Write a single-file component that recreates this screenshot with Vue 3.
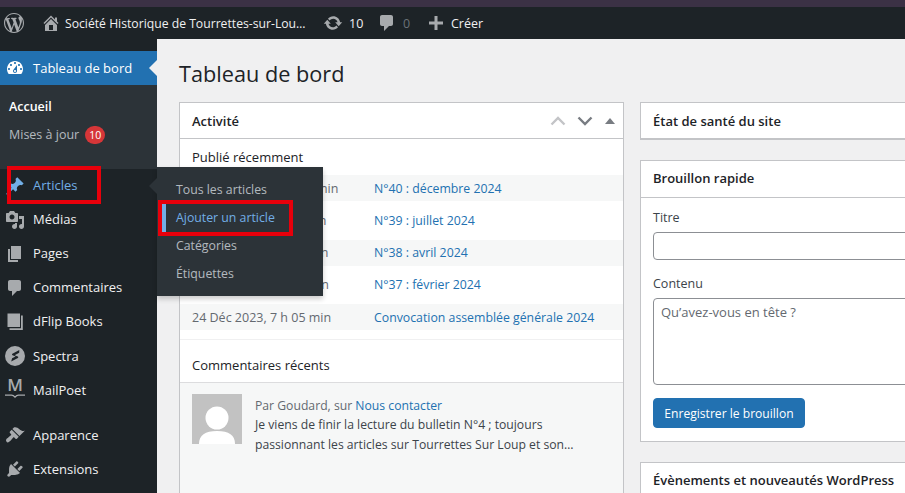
<script setup>
const icons = {
  wp: 'M20 10c0-5.51-4.49-10-10-10C4.48 0 0 4.49 0 10c0 5.52 4.48 10 10 10 5.51 0 10-4.48 10-10zM7.78 15.37L4.37 6.22c.55-.02 1.17-.08 1.17-.08.5-.06.44-1.13-.06-1.11 0 0-1.45.11-2.37.11-.18 0-.37 0-.58-.01C4.12 2.69 6.87 1.11 10 1.11c2.33 0 4.45.87 6.05 2.34-.68-.11-1.65.39-1.65 1.58 0 .74.45 1.36.9 2.1.35.61.55 1.36.55 2.46 0 1.49-1.4 5-1.4 5l-3.03-8.37c.54-.02.82-.17.82-.17.5-.05.44-1.25-.06-1.22 0 0-1.44.12-2.38.12-.87 0-2.33-.12-2.33-.12-.5-.03-.56 1.2-.06 1.22l.92.08 1.26 3.41zM17.41 10c.24-.64.74-1.87.43-4.25.7 1.29 1.05 2.71 1.05 4.25 0 3.29-1.73 6.24-4.4 7.78.97-2.59 1.94-5.2 2.92-7.78zM6.1 18.09C3.12 16.65 1.11 13.53 1.11 10c0-1.3.23-2.48.72-3.59C3.25 10.3 4.67 14.2 6.1 18.09zm4.03-6.63l2.58 6.98c-.86.29-1.76.45-2.71.45-.79 0-1.57-.11-2.29-.33.81-2.38 1.62-4.74 2.42-7.1z',
  home: 'M16 8.5l1.53 1.53-1.06 1.06L10 4.62l-6.47 6.47-1.06-1.06L10 2.5l4 4v-2h2v4zm-6-2.46l6 5.99V18H4v-5.97zM12 17v-5H8v5h4z',
  update: 'M10.2 3.28c3.53 0 6.43 2.61 6.92 6h2.08l-3.5 4-3.5-4h2.32c-.45-1.97-2.21-3.44-4.32-3.44-1.45 0-2.73.71-3.54 1.78L4.95 5.66C6.23 4.2 8.11 3.28 10.2 3.28zm-.4 13.44c-3.52 0-6.43-2.61-6.92-6H.8l3.5-4c1.17 1.33 2.33 2.67 3.5 4H5.48c.45 1.97 2.21 3.44 4.32 3.44 1.45 0 2.73-.71 3.54-1.78l1.71 1.95c-1.28 1.46-3.15 2.39-5.25 2.39z',
  comment: 'M5 2h9c1.1 0 2 .9 2 2v7c0 1.1-.9 2-2 2h-2l-5 5v-5H5c-1.1 0-2-.9-2-2V4c0-1.1.9-2 2-2z',
  plus: 'M17 8.5v3h-5.5V17h-3v-5.5H3v-3h5.5V3h3v5.5z',
  dash: 'M3.76 16h12.48c1.1-1.37 1.76-3.11 1.76-5 0-4.42-3.58-8-8-8s-8 3.58-8 8c0 1.89.66 3.63 1.76 5zM10 4c.55 0 1 .45 1 1s-.45 1-1 1-1-.45-1-1 .45-1 1-1zM6 6c.55 0 1 .45 1 1s-.45 1-1 1-1-.45-1-1 .45-1 1-1zm8 0c.55 0 1 .45 1 1s-.45 1-1 1-1-.45-1-1 .45-1 1-1zm-5.37 5.55L12 7v6c0 1.1-.9 2-2 2s-2-.9-2-2c0-.57.24-1.08.63-1.45zM4 10c.55 0 1 .45 1 1s-.45 1-1 1-1-.45-1-1 .45-1 1-1zm12 0c.55 0 1 .45 1 1s-.45 1-1 1-1-.45-1-1 .45-1 1-1zm-5 3c0-.55-.45-1-1-1s-1 .45-1 1 .45 1 1 1 1-.45 1-1z',
  post: 'M10.44 3.02l1.82-1.82 6.36 6.35-1.83 1.82c-1.05-.68-2.48-.57-3.41.36l-.75.75c-.92.93-1.04 2.35-.35 3.41l-1.83 1.82-2.41-2.41-2.8 2.79c-.42.42-3.38 2.71-3.8 2.29s1.86-3.39 2.28-3.81l2.79-2.79L4.1 9.36l1.83-1.82c1.05.69 2.48.57 3.4-.36l.75-.75c.93-.92 1.05-2.35.36-3.41z',
  media: 'M13 11V4c0-.55-.45-1-1-1h-1.67L9 1H5L3.67 3H2c-.55 0-1 .45-1 1v7c0 .55.45 1 1 1h10c.55 0 1-.45 1-1zM7 4.5c1.38 0 2.5 1.12 2.5 2.5S8.38 9.5 7 9.5 4.5 8.38 4.5 7 5.62 4.5 7 4.5zM14 6h5v10.5c0 1.38-1.12 2.5-2.5 2.5S14 17.88 14 16.5s1.12-2.5 2.5-2.5c.17 0 .34.02.5.05V9h-3V6zm-4 8.05V13h2v3.5c0 1.38-1.12 2.5-2.5 2.5S7 17.88 7 16.5 8.12 14 9.5 14c.17 0 .34.02.5.05z',
  page: 'M6 15V2h10v13H6zm-1 1h8v2H3V5h2v11z',
  book: 'M2.500 1.500H15v13.500H2.500zM16 3.500h1.800V18H4.500v-1.800H16z',
  spectra: 'M10 0a10 10 0 1 0 0 20 10 10 0 0 0 0-20zm4.2 6.800-4.600 2.500 3.200 1.300c.6.3.7 1.100.1 1.400l-6.700 3.600.9-3.300 3.500-1.800-3.100-1.300c-.6-.3-.7-1.100-.1-1.400l6.900-3.900z',
  brush: 'M14.48 11.06L7.41 3.99l1.5-1.5c.5-.56 2.3-.47 3.51.32 1.21.8 1.43 1.28 2.91 2.1 1.18.64 2.45 1.26 4.45.85zm-.71.71L6.7 4.7 4.93 6.47c-.39.39-.39 1.02 0 1.41l1.06 1.06c.39.39.39 1.03 0 1.42-.6.6-1.43 1.11-2.21 1.69-.35.26-.7.53-1.01.84C1.43 13.23.4 14.98 1.4 16.6c1.01 1.61 2.76.59 4.09-.74.31-.31.58-.66.85-1.01.57-.78 1.08-1.61 1.69-2.21.39-.39 1.02-.39 1.41 0l1.06 1.06c.39.39 1.02.39 1.41 0z',
  plug: 'M13.11 4.36L9.87 7.6 8 5.73l3.24-3.24c.35-.34 1.05-.2 1.56.32.52.51.66 1.21.31 1.55zm-8 1.77l.91-1.12 9.01 9.01-1.19.84c-.71.71-2.63 1.16-3.82 1.16H6.14L4.9 17.26c-.59.59-1.54.59-2.12 0-.59-.58-.59-1.53 0-2.12l1.24-1.24v-3.88c0-1.13.4-3.19 1.09-3.89zm7.26 3.97l3.24-3.24c.34-.35 1.04-.21 1.55.31.52.51.66 1.21.31 1.55l-3.24 3.25z'
}
const menuTop = [
  { label: 'Médias', icon: 'media' },
  { label: 'Pages', icon: 'page' },
  { label: 'Commentaires', icon: 'comment' },
  { label: 'dFlip Books', icon: 'book' },
  { label: 'Spectra', icon: 'spectra' }
]
const flyout = ['Tous les articles', 'Ajouter un article', 'Catégories', 'Étiquettes']
const posts = [
  { date: '16 Déc 2024, 10 h 24 min', title: 'N°40 : décembre 2024' },
  { date: '3 Juil 2024, 11 h 30 min', title: 'N°39 : juillet 2024' },
  { date: '9 Avr 2024, 10 h 15 min', title: 'N°38 : avril 2024' },
  { date: '4 Fév 2024, 18 h 22 min', title: 'N°37 : février 2024' },
  { date: '24 Déc 2023, 7 h 05 min', title: 'Convocation assemblée générale 2024' }
]
</script>

<template>
  <div class="page">
    <div class="strip"></div>
    <header class="bar">
      <svg class="bar-logo" viewBox="0 0 20 20"><path :d="icons.wp" /></svg>
      <svg class="bar-home" viewBox="0 0 20 20"><path :d="icons.home" /></svg>
      <span class="bar-site">Société Historique de Tourrettes-sur-Lou…</span>
      <svg class="bar-update" viewBox="0 0 20 20"><path :d="icons.update" /></svg>
      <span class="bar-count">10</span>
      <svg class="bar-comment" viewBox="0 0 20 20"><path :d="icons.comment" /></svg>
      <span class="bar-zero">0</span>
      <svg class="bar-plus" viewBox="0 0 20 20"><path :d="icons.plus" /></svg>
      <span class="bar-new">Créer</span>
    </header>
    <div class="body">
      <aside class="side">
        <div class="gap-top"></div>
        <div class="item current">
          <svg class="ico" viewBox="0 0 20 20"><path :d="icons.dash" /></svg>
          <span>Tableau de bord</span>
          <i class="cur-arrow"></i>
        </div>
        <div class="sub">
          <div class="sub-a">Accueil</div>
          <div class="sub-b">Mises à jour <span class="badge">10</span></div>
        </div>
        <div class="item active">
          <svg class="ico" viewBox="0 0 20 20"><path :d="icons.post" /></svg>
          <span>Articles</span>
        </div>
        <div v-for="m in menuTop" :key="m.label" class="item">
          <svg class="ico" viewBox="0 0 20 20"><path :d="icons[m.icon]" /></svg>
          <span>{{ m.label }}</span>
        </div>
        <div class="item">
          <span class="mp-ico"><b>M</b><svg viewBox="0 0 20 5"><path d="M0 1.200h6.500c1.500 0 2.500.8 3.500 2 1-1.200 2-2 3.500-2H20" fill="none" stroke="#a7aaad" stroke-width="1.300" /></svg></span>
          <span>MailPoet</span>
        </div>
        <div class="sep"></div>
        <div class="item">
          <svg class="ico" viewBox="0 0 20 20"><path :d="icons.brush" /></svg>
          <span>Apparence</span>
        </div>
        <div class="item">
          <svg class="ico" viewBox="0 0 20 20"><path :d="icons.plug" /></svg>
          <span>Extensions</span>
        </div>
      </aside>
      <main class="main">
        <h1>Tableau de bord</h1>
        <div class="cols">
          <section class="box col-left">
            <div class="box-head">
              <h2>Activité</h2>
              <div class="handles">
                <svg class="chev" viewBox="0 0 20 20"><path d="M3.500 13.500 10 7l6.500 6.500" /></svg>
                <svg class="chev dark" viewBox="0 0 20 20"><path d="M3.500 6.500 10 13l6.500-6.500" /></svg>
                <i class="tri"></i>
              </div>
            </div>
            <div class="pub-title">Publié récemment</div>
            <ul class="posts">
              <li v-for="p in posts" :key="p.title">
                <span class="date">{{ p.date }}</span>
                <a>{{ p.title }}</a>
              </li>
            </ul>
            <div class="rule"></div>
            <div class="com-title">Commentaires récents</div>
            <div class="comment">
              <svg class="avatar" viewBox="0 0 50 50">
                <rect width="50" height="50" fill="#c2c2c2" />
                <circle cx="25" cy="24" r="11.500" fill="#fff" />
                <path d="M7 50c0-9 6-13 18-13s18 4 18 13z" fill="#fff" />
              </svg>
              <div class="com-text">
                <div class="meta">Par Goudard, sur <a>Nous contacter</a></div>
                <p>Je viens de finir la lecture du bulletin N°4 ; toujours<br />passionnant les articles sur Tourrettes Sur Loup et son…</p>
              </div>
            </div>
          </section>
          <div class="col-right">
            <section class="box">
              <div class="box-head"><h2>État de santé du site</h2></div>
            </section>
            <section class="box">
              <div class="box-head tall"><h2>Brouillon rapide</h2></div>
              <form class="draft">
                <label>Titre</label>
                <div class="input"></div>
                <label class="l2">Contenu</label>
                <div class="area">Qu’avez-vous en tête ?</div>
                <button type="button">Enregistrer le brouillon</button>
              </form>
            </section>
            <section class="box">
              <div class="box-head last"><h2>Évènements et nouveautés WordPress</h2></div>
            </section>
          </div>
        </div>
      </main>
    </div>
    <nav class="fly">
      <i class="fly-arrow"></i>
      <div v-for="(f, i) in flyout" :key="f" class="fly-item" :class="{ on: i === 1 }">{{ f }}</div>
    </nav>
    <div class="mark mark-a"></div>
    <div class="mark mark-b"></div>
  </div>
</template>

<style>
html, body { margin: 0; overflow: hidden; }
</style>

<style scoped>
.page {
  position: relative;
  width: 905px;
  height: 493px;
  overflow: hidden;
  background: #f0f0f1;
  font-family: "Open Sans", "Noto Sans", sans-serif;
  font-size: 12.5px;
  color: #3c434a;
  display: flex;
  flex-direction: column;
}
.strip { height: 7px; background: #3b3145; flex: none; }
.bar {
  flex: none;
  height: 32px;
  background: #1d2327;
  color: #f0f0f1;
  display: flex;
  align-items: center;
  padding-left: 4px;
  white-space: nowrap;
}
.bar svg { fill: #a7aaad; flex: none; }
.bar-logo { width: 20px; height: 20px; }
.bar-home { width: 20px; height: 20px; margin-left: 17px; }
.bar-site { margin-left: 4px; width: 258px; font-size: 12.2px; }
.bar-update { width: 20px; height: 20px; }
.bar-count { margin-left: 6px; width: 13px; }
.bar-comment { width: 20px; height: 20px; margin-left: 15px; }
.bar-zero { margin-left: 6px; width: 8px; color: #6b7177; }
.bar-plus { width: 20px; height: 20px; margin-left: 15px; }
.bar-new { margin-left: 5px; }
.body { flex: 1; display: flex; min-height: 0; }
.side { width: 157px; flex: none; background: #1d2327; color: #f0f0f1; font-size: 13px; }
.gap-top { height: 12px; }
.item {
  position: relative;
  height: 34px;
  display: flex;
  align-items: center;
  padding-left: 33px;
  padding-bottom: 2px;
  box-sizing: border-box;
}
.item.current, .item:nth-last-child(-n+5) { padding-bottom: 0; }
.ico { position: absolute; left: 5px; top: 7px; width: 20px; height: 20px; fill: #a7aaad; }
.current { background: #2271b1; color: #fff; }
.current .ico { fill: #fff; }
.cur-arrow {
  position: absolute;
  right: 0;
  top: 9px;
  border: 8px solid transparent;
  border-left-width: 0;
  border-right-color: #f0f0f1;
}
.sub { background: #2c3338; height: 84px; padding-top: 12px; box-sizing: border-box; font-size: 12.5px; }
.sub-a { padding-left: 9px; font-weight: 600; color: #fff; line-height: 20px; }
.sub-b { padding-left: 9px; margin-top: 8px; line-height: 20px; color: rgba(240, 246, 252, .7); display: flex; align-items: center; gap: 6px; }
.badge {
  width: 20px;
  height: 18px;
  border-radius: 9px;
  background: #d63638;
  color: #fff;
  font-size: 10.5px;
  display: flex;
  align-items: center;
  justify-content: center;
}
.active { color: #72aee6; }
.active .ico { fill: #72aee6; }
.mp-ico { position: absolute; left: 5px; top: 4px; width: 20px; color: #a7aaad; text-align: center; line-height: 16px; font-size: 17px; }
.mp-ico b { display: block; font-weight: 600; }
.mp-ico svg { display: block; width: 20px; height: 5px; margin-top: 1px; }
.sep { height: 11px; }
.main { flex: 1; min-width: 0; padding-left: 22px; }
h1 {
  margin: 0;
  padding-top: 20px;
  font-size: 21.7px;
  font-weight: 400;
  line-height: 30px;
  color: #1d2327;
}
.cols { margin-top: 13px; display: flex; gap: 16px; align-items: flex-start; }
.box { background: #fff; border: 1px solid #c3c4c7; box-sizing: border-box; }
.col-left { width: 445px; flex: none; height: 500px; }
.col-right { width: 445px; flex: none; display: flex; flex-direction: column; gap: 20px; }
.box-head {
  height: 35px;
  display: flex;
  align-items: center;
  justify-content: space-between;
  padding: 0 12px;
  border-bottom: 1px solid #c3c4c7;
}
.box-head.tall { height: 37px; box-sizing: border-box; padding-bottom: 2px; }
.box-head.last { padding-bottom: 2px; height: 33px; }
h2 { margin: 0; font-size: 13px; font-weight: 600; color: #1d2327; }
.handles { display: flex; align-items: center; }
.chev { width: 20px; height: 20px; fill: none; stroke: #c3c4c7; stroke-width: 2.4; margin-right: 7px; }
.chev.dark { stroke: #787c82; margin-right: 10px; }
.tri { border: 5px solid transparent; border-top-width: 0; border-bottom: 6px solid #787c82; margin-right: -4px; }
.pub-title { padding: 0 12px; height: 36px; line-height: 37px; color: #1d2327; font-size: 13px; }
.posts { list-style: none; margin: 0; padding: 0; }
.posts li { height: 26px; margin-bottom: 6.25px; padding: 0 12px; display: flex; align-items: center; font-size: 12.3px; }
.posts li:nth-child(odd) { background: #f6f7f7; }
.date { width: 182px; flex: none; color: #646970; font-size: 12.5px; }
a { color: #2271b1; }
.rule { border-top: 1px solid #f0f0f1; margin-top: 9px; }
.com-title { padding: 0 12px; height: 42px; line-height: 50px; color: #1d2327; font-size: 13px; border-bottom: 1px solid #dcdcde; }
.comment { background: #f6f7f7; height: 200px; padding: 11px 12px; display: flex; gap: 13px; font-size: 12.2px; }
.avatar { width: 50px; height: 50px; flex: none; }
.com-text { padding-top: 2px; }
.meta { color: #646970; line-height: 19px; }
.com-text p { margin: 0; line-height: 20px; color: #3c434a; }
.draft { padding: 10px 12px 13px; display: flex; flex-direction: column; align-items: flex-start; }
label { line-height: 20px; color: #3c434a; }
.l2 { margin-top: 14px; }
.input { margin-top: 4px; width: 100%; height: 28px; border: 1px solid #8c8f94; border-radius: 4px; box-sizing: border-box; background: #fff; }
.area {
  margin-top: 4px;
  width: 100%;
  height: 87px;
  border: 1px solid #8c8f94;
  border-radius: 4px;
  box-sizing: border-box;
  padding: 3px 7px;
  line-height: 20px;
  font-size: 13px;
  color: #646970;
}
button {
  margin-top: 13px;
  height: 30px;
  width: 152px;
  padding: 0;
  border: 1px solid #2271b1;
  border-radius: 4px;
  background: #2271b1;
  color: #fff;
  font: inherit;
  font-size: 12.1px;
}
.fly {
  position: absolute;
  left: 157px;
  top: 167px;
  width: 166px;
  height: 129px;
  padding-top: 9px;
  box-sizing: border-box;
  background: #2c3338;
  box-shadow: 0 3px 5px rgba(0, 0, 0, .2);
  font-size: 12.3px;
}
.fly-arrow {
  position: absolute;
  left: -8px;
  top: 11px;
  border: 8px solid transparent;
  border-left-width: 0;
  border-right-color: #2c3338;
}
.fly-item { position: relative; height: 28px; line-height: 28px; padding-left: 19px; color: rgba(240, 246, 252, .7); }
.fly-item.on { color: #72aee6; }
.fly-item.on::before { content: ""; position: absolute; left: 5px; top: 0; width: 4px; height: 28px; background: #72aee6; }
.mark { position: absolute; border: 4px solid #e8000b; box-sizing: border-box; pointer-events: none; }
.mark-a { left: 7px; top: 166px; width: 94px; height: 38px; }
.mark-b { left: 158px; top: 200px; width: 135px; height: 36px; }
</style>
